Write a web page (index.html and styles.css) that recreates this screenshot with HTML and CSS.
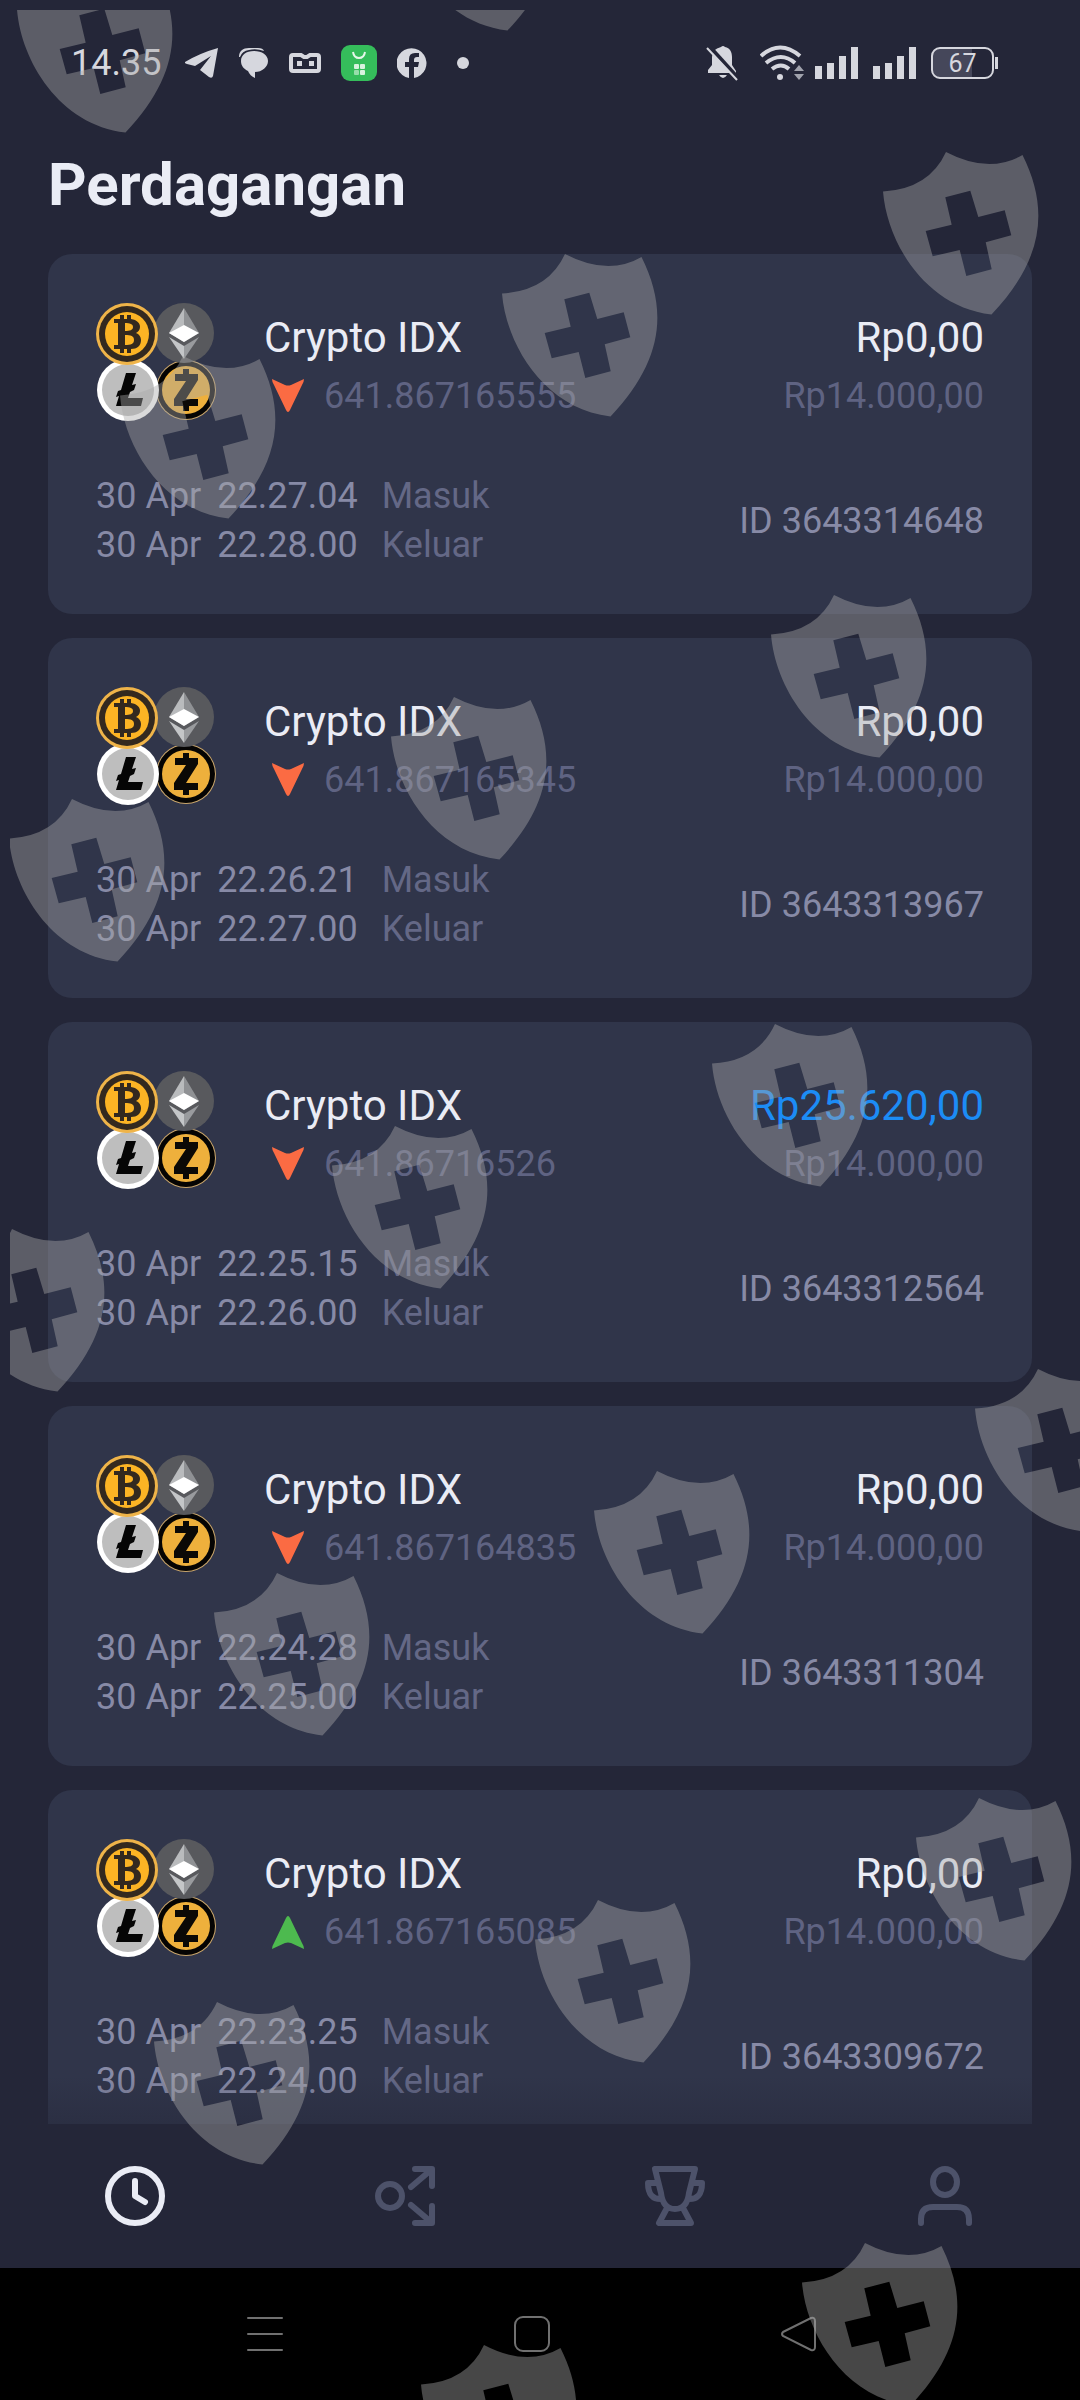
FILE: index.html
```html
<!DOCTYPE html>
<html lang="id">
<head>
<meta charset="utf-8">
<meta name="viewport" content="width=device-width, initial-scale=1">
<title>Perdagangan</title>
<link rel="stylesheet" href="styles.css">
</head>
<body>
<svg class="defs" width="0" height="0" aria-hidden="true">
  <defs>
    <symbol id="coins" viewBox="0 0 120 120">
      <circle cx="90" cy="88" r="30" fill="#c9a56a"/>
      <circle cx="90" cy="88" r="29" fill="#050403"/>
      <circle cx="90" cy="88" r="24" fill="#eeb03c"/>
      <path d="M79 72h8v-5h6v5h9v6L90 97h12v7h-9v5h-6v-5h-9v-7l12-18H79z" fill="#0b0906"/>
      <circle cx="88" cy="31" r="30" fill="#58595d"/>
      <path d="M88 6L73 31l15 9z" fill="#b9bbbd"/>
      <path d="M88 6l15 25-15 9z" fill="#8f9194"/>
      <path d="M88 23l15 8-15 9-15-9z" fill="#fff"/>
      <path d="M73 35l15 9v13z" fill="#c4c6c8"/>
      <path d="M103 35l-15 9v13z" fill="#999b9e"/>
      <circle cx="32" cy="88" r="31" fill="#fff"/>
      <circle cx="32" cy="88" r="26" fill="#bebebe"/>
      <path d="M30 71h10l-4 12 4-1-2 6-4 2-2 6h15l-2 8H20l3-10-3 1 2-6 3-1z" fill="#050505"/>
      <circle cx="31" cy="32" r="31" fill="#efb449"/>
      <circle cx="31" cy="32" r="28" fill="#33291f"/>
      <circle cx="31" cy="32" r="22" fill="#fcb424"/>
      <path d="M18 17h6v-4h4v4h3v-4h4v4c6 1 9 4 9 8 0 3-2 5-4 6 3 1 5 4 5 7 0 6-4 9-10 9v4h-4v-4h-3v4h-4v-4h-6v-4h4V21h-4zm11 4v8c5 0 8-1 8-4s-3-4-8-4zm0 12v10c6 0 9-1 9-5s-3-5-9-5z" fill="#33291f" fill-rule="evenodd"/>
    </symbol>
    <symbol id="arrow" viewBox="0 0 32 34">
      <path d="M0 0L13 6q3 1 6 0L32 0q0 3-2 6L18 31q-2 4-4 0L2 6Q0 3 0 0z" fill="currentColor"/>
    </symbol>
    <symbol id="shield" viewBox="0 0 164 164">
      <path fill-rule="evenodd" fill="currentColor" d="M0 39.5Q46 37 63 0Q106 22.500 139.500 3C167 58 160 108 108.500 162.500C42 155 4 90 0 39.500zM62.300 45.300L68.700 72.700 42.700 79 49.700 104.300 76.700 98 83.300 124 108.700 117.300 102.700 90.300 128.300 83.300 121.700 58.300 95.300 65 87.300 38.700z"/>
    </symbol>
  </defs>
</svg>

<div class="screen">
  <header class="status">
    <div class="status-left">
      <span class="clock">14.35</span>
      <svg width="34" height="32" viewBox="0 0 34 32"><path d="M0 15Q15 6 33 1L28 29q-1 3-4 1l-9-7 11-14L10 19 2 17q-3-1-2-2z" fill="currentColor"/></svg>
      <svg width="30" height="32" viewBox="0 0 30 32"><path d="M0 10C0 4 4 1 10 1h9q5 0 6 3-8-3-15-1-7 1-9 7z" fill="currentColor"/><path d="M15 4c8 0 14 4 14 10s-6 11-13 11v6q-5-2-7-7c-4-2-7-5-7-10C2 8 7 4 15 4z" fill="currentColor"/></svg>
      <svg width="32" height="24" viewBox="0 0 32 24"><path d="M4 4h8l3 2h3l3-2h7q2 0 2 2v12q0 2-2 2H4q-2 0-2-2V6q0-2 2-2z" fill="none" stroke="currentColor" stroke-width="4"/><path d="M8 10h5v5H8zM20 10h5v5h-5z" fill="currentColor"/></svg>
      <svg width="36" height="36" viewBox="0 0 36 36"><rect width="36" height="36" rx="9" fill="#35bd5b"/><path d="M12 7q1 6 6 6t6-6" fill="none" stroke="#e6f7ea" stroke-width="2"/><g fill="#d9f3df"><rect x="13" y="19" width="5" height="5" rx="1"/><rect x="19" y="19" width="5" height="5" rx="1"/><rect x="13" y="25" width="5" height="5" rx="1" opacity=".6"/><rect x="19" y="25" width="5" height="5" rx="1"/></g></svg>
      <svg width="30" height="30" viewBox="0 0 30 30"><path d="M12 30V19H8v-5h4v-3q0-6 6-6h4v4h-2q-3 0-3 3v2h5l-1 5h-4v11A15 15 0 1 0 12 30z" fill="currentColor"/></svg>
      <svg width="12" height="12" viewBox="0 0 12 12"><circle cx="6" cy="6" r="6" fill="currentColor"/></svg>
    </div>
    <div class="status-right">
      <svg width="34" height="36" viewBox="0 0 34 36"><path d="M15 2q2-2 4 0c5 1 7 5 7 10v8l4 6v2H2v-3l4-5v-8q0-8 9-10zM13 30h8q-4 6-8 0z" fill="currentColor"/><path d="M3 1l30 33" stroke="#242638" stroke-width="4"/><path d="M1 3l30 32" stroke="currentColor" stroke-width="2"/></svg>
      <svg class="wifi" width="45" height="36" viewBox="0 0 45 36"><g fill="none" stroke="currentColor" stroke-width="4"><path d="M1 11q19-17 39 0"/><path d="M6 18q15-12 29 0"/><path d="M12 24q9-7 17 0"/></g><circle cx="20" cy="32" r="3" fill="currentColor"/><path d="M34 26l5-6 5 6zM34 29l5 6 5-6z" fill="currentColor" opacity=".7"/></svg>
      <svg class="signal" width="44" height="32" viewBox="0 0 44 32"><path d="M0 19h7v13H0zM12 16h7v16h-7zM24 9h7v23h-7zM36 0h7v32h-7z" fill="currentColor"/></svg>
      <svg class="signal" width="44" height="32" viewBox="0 0 44 32"><path d="M0 19h7v13H0zM12 16h7v16h-7zM24 9h7v23h-7zM36 0h7v32h-7z" fill="currentColor"/></svg>
      <span class="battery">67</span>
    </div>
  </header>

  <h1 class="title">Perdagangan</h1>

  <main class="list">
    <article class="card">
      <div class="deal">
        <svg class="coins"><use href="#coins"/></svg>
        <div class="asset"><h2 class="name">Crypto IDX</h2><p class="rate"><svg class="arrow down"><use href="#arrow"/></svg>641.867165555</p></div>
        <div class="sums"><p class="result">Rp0,00</p><p class="stake">Rp14.000,00</p></div>
      </div>
      <div class="details">
        <div class="times"><span>30 Apr</span><span>22.27.04</span><span class="kind">Masuk</span><span>30 Apr</span><span>22.28.00</span><span class="kind">Keluar</span></div>
        <p class="deal-id">ID 3643314648</p>
      </div>
    </article>
    <article class="card">
      <div class="deal">
        <svg class="coins"><use href="#coins"/></svg>
        <div class="asset"><h2 class="name">Crypto IDX</h2><p class="rate"><svg class="arrow down"><use href="#arrow"/></svg>641.867165345</p></div>
        <div class="sums"><p class="result">Rp0,00</p><p class="stake">Rp14.000,00</p></div>
      </div>
      <div class="details">
        <div class="times"><span>30 Apr</span><span>22.26.21</span><span class="kind">Masuk</span><span>30 Apr</span><span>22.27.00</span><span class="kind">Keluar</span></div>
        <p class="deal-id">ID 3643313967</p>
      </div>
    </article>
    <article class="card">
      <div class="deal">
        <svg class="coins"><use href="#coins"/></svg>
        <div class="asset"><h2 class="name">Crypto IDX</h2><p class="rate"><svg class="arrow down"><use href="#arrow"/></svg>641.86716526</p></div>
        <div class="sums"><p class="result win">Rp25.620,00</p><p class="stake">Rp14.000,00</p></div>
      </div>
      <div class="details">
        <div class="times"><span>30 Apr</span><span>22.25.15</span><span class="kind">Masuk</span><span>30 Apr</span><span>22.26.00</span><span class="kind">Keluar</span></div>
        <p class="deal-id">ID 3643312564</p>
      </div>
    </article>
    <article class="card">
      <div class="deal">
        <svg class="coins"><use href="#coins"/></svg>
        <div class="asset"><h2 class="name">Crypto IDX</h2><p class="rate"><svg class="arrow down"><use href="#arrow"/></svg>641.867164835</p></div>
        <div class="sums"><p class="result">Rp0,00</p><p class="stake">Rp14.000,00</p></div>
      </div>
      <div class="details">
        <div class="times"><span>30 Apr</span><span>22.24.28</span><span class="kind">Masuk</span><span>30 Apr</span><span>22.25.00</span><span class="kind">Keluar</span></div>
        <p class="deal-id">ID 3643311304</p>
      </div>
    </article>
    <article class="card">
      <div class="deal">
        <svg class="coins"><use href="#coins"/></svg>
        <div class="asset"><h2 class="name">Crypto IDX</h2><p class="rate"><svg class="arrow up"><use href="#arrow"/></svg>641.867165085</p></div>
        <div class="sums"><p class="result">Rp0,00</p><p class="stake">Rp14.000,00</p></div>
      </div>
      <div class="details">
        <div class="times"><span>30 Apr</span><span>22.23.25</span><span class="kind">Masuk</span><span>30 Apr</span><span>22.24.00</span><span class="kind">Keluar</span></div>
        <p class="deal-id">ID 3643309672</p>
      </div>
    </article>
  </main>

  <nav class="tabs">
    <a class="tab active" href="#riwayat" aria-label="Riwayat"><svg viewBox="0 0 60 60"><circle cx="30" cy="30" r="27"/><path d="M30 15v15l10 6"/></svg></a>
    <a class="tab" href="#trading" aria-label="Trading"><svg viewBox="0 0 60 60"><circle cx="15" cy="30" r="12"/><path d="M36 21L56 4M40 3h17v17M36 39l20 17M40 57h17V40"/></svg></a>
    <a class="tab" href="#turnamen" aria-label="Turnamen"><svg viewBox="0 0 60 60"><path d="M10 3h40l-6 24q-2 16-14 16T16 27zM13 17H3q0 17 14 16M47 17h10q0 17-14 16M22 42l-8 15h32l-8-15"/></svg></a>
    <a class="tab" href="#profil" aria-label="Profil"><svg viewBox="0 0 60 60"><ellipse cx="30" cy="16" rx="12" ry="13"/><path d="M6 57V53Q6 41 18 41H42Q54 41 54 53V57"/></svg></a>
  </nav>

  <div class="system">
    <button class="key" aria-label="Menu"><svg viewBox="0 0 36 36"><path d="M1 2h34M1 18h34M1 34h34"/></svg></button>
    <button class="key" aria-label="Beranda"><svg viewBox="0 0 36 36"><rect x="1" y="1" width="34" height="34" rx="8"/></svg></button>
    <button class="key" aria-label="Kembali"><svg viewBox="0 0 36 36"><path d="M2 16L30 2q4-1 4 3v26q0 4-4 3L2 20q-2-2 0-4z"/></svg></button>
  </div>

  <div class="watermark" aria-hidden="true">
    <svg width="100%" height="100%">
      <g transform="translate(-10 -9)">
        <use href="#shield" x="17" y="-31" width="164" height="164"/>
        <use href="#shield" x="399" y="-133" width="164" height="164"/>
        <use href="#shield" x="883" y="151" width="164" height="164"/>
        <use href="#shield" x="502" y="253" width="164" height="164"/>
        <use href="#shield" x="120" y="355" width="164" height="164"/>
        <use href="#shield" x="771" y="594" width="164" height="164"/>
        <use href="#shield" x="391" y="696" width="164" height="164"/>
        <use href="#shield" x="9" y="798" width="164" height="164"/>
        <use href="#shield" x="712" y="1023" width="164" height="164"/>
        <use href="#shield" x="332" y="1125" width="164" height="164"/>
        <use href="#shield" x="-51" y="1228" width="164" height="164"/>
        <use href="#shield" x="975" y="1368" width="164" height="164"/>
        <use href="#shield" x="594" y="1470" width="164" height="164"/>
        <use href="#shield" x="214" y="1572" width="164" height="164"/>
        <use href="#shield" x="916" y="1797" width="164" height="164"/>
        <use href="#shield" x="535" y="1899" width="164" height="164"/>
        <use href="#shield" x="154" y="2001" width="164" height="164"/>
        <use href="#shield" x="802" y="2242" width="164" height="164"/>
        <use href="#shield" x="421" y="2344" width="164" height="164"/>
      </g>
    </svg>
  </div>
</div>
</body>
</html>
```
FILE: styles.css
```css
* {
  box-sizing: border-box;
}

body {
  margin: 0;
  background: #242638;
  color: #eaecf5;
  font-family: Roboto, "Liberation Sans", sans-serif;
}

h1,
h2,
p {
  margin: 0;
  font-weight: 400;
}

svg {
  display: block;
  flex: none;
}

.defs {
  position: absolute;
}

.screen {
  position: relative;
  display: flex;
  flex-direction: column;
  height: 100vh;
  overflow: hidden;
}

/* Status bar */
.status {
  display: flex;
  justify-content: space-between;
  align-items: center;
  height: 126px;
  padding: 0 86px 0 71px;
  color: #d6d7de;
}

.status-left,
.status-right {
  display: flex;
  align-items: center;
}

.status-left {
  gap: 20px;
}

.status-left svg:last-child {
  margin-left: 10px;
}

.status-right {
  gap: 14px;
}

.status-right svg:first-child {
  margin-right: 6px;
}

.status-right .wifi {
  margin-right: -4px;
}

.clock {
  margin-right: 4px;
  font-size: 36px;
}

.battery {
  position: relative;
  width: 63px;
  height: 32px;
  border: 2px solid currentColor;
  border-radius: 9px;
  background: linear-gradient(90deg, #45475a 66%, transparent 66%);
  font-size: 25px;
  line-height: 29px;
  text-align: center;
}

.battery::after {
  content: "";
  position: absolute;
  top: 8px;
  right: -6px;
  width: 3px;
  height: 12px;
  background: currentColor;
}

.title {
  padding: 24px 48px 34px;
  font-size: 60px;
  line-height: 70px;
  font-weight: 700;
}

/* Trades */
.list {
  position: relative;
  display: flex;
  flex: 1;
  flex-direction: column;
  gap: 24px;
  min-height: 0;
  padding: 0 48px;
  overflow: hidden;
}

.list::after {
  content: "";
  position: absolute;
  inset: auto 0 0;
  height: 48px;
  background: linear-gradient(transparent, #24263866);
}

.card {
  flex: none;
  padding: 48px 48px 44px;
  border-radius: 24px;
  background: #30354a;
}

.deal {
  display: flex;
  height: 170px;
}

.coins {
  width: 120px;
  height: 120px;
}

.asset {
  flex: 1;
  padding: 8px 0 0 48px;
}

.name,
.result {
  font-size: 42px;
  line-height: 56px;
}

.result.win {
  color: #1c8cf5;
}

.rate,
.stake {
  color: #5f6382;
  font-size: 36px;
  line-height: 60px;
}

.rate {
  display: flex;
  align-items: center;
  gap: 20px;
  padding-left: 8px;
}

.arrow {
  width: 32px;
  height: 34px;
}

.down {
  color: #fb6b43;
}

.up {
  color: #4dba4f;
  transform: rotate(180deg);
}

.sums {
  padding-top: 8px;
  text-align: right;
}

.details {
  display: flex;
  justify-content: space-between;
  align-items: center;
  color: #878aa6;
  font-size: 36px;
  line-height: 49px;
}

.times {
  display: grid;
  grid-template-columns: repeat(3, auto);
  column-gap: 16px;
}

.kind {
  padding-left: 8px;
  color: #646886;
}

/* Tab bar */
.tabs {
  display: grid;
  grid-template-columns: repeat(4, 1fr);
  flex: none;
  height: 144px;
}

.tab {
  display: grid;
  place-items: center;
  color: #4d526a;
}

.tab.active {
  color: #eaecf5;
}

.tab svg {
  width: 60px;
  height: 60px;
  fill: none;
  stroke: currentColor;
  stroke-width: 6;
  stroke-linecap: round;
  stroke-linejoin: round;
}

/* System keys */
.system {
  display: grid;
  grid-template-columns: repeat(3, 1fr);
  flex: none;
  height: 132px;
  padding: 0 148px 0 132px;
  background: #000;
}

.key {
  display: grid;
  place-items: center;
  padding: 0;
  border: 0;
  background: none;
  color: #707070;
}

.key svg {
  width: 36px;
  height: 36px;
  fill: none;
  stroke: currentColor;
  stroke-width: 2;
  stroke-linecap: round;
}

.watermark {
  position: absolute;
  inset: 10px 0 0 10px;
  overflow: hidden;
  color: #a9a9a9;
  opacity: .42;
  pointer-events: none;
}
```
